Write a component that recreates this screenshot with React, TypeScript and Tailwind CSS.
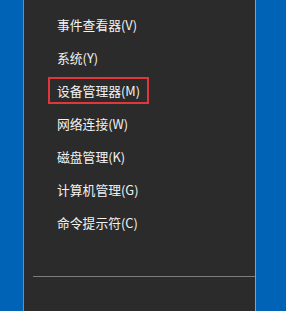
export default function App() {
  const items = [
    "事件查看器(V)",
    "系统(Y)",
    "设备管理器(M)",
    "网络连接(W)",
    "磁盘管理(K)",
    "计算机管理(G)",
    "命令提示符(C)",
  ];
  return (
    <div
      className="flex h-[311px] w-[286px] overflow-hidden bg-[#0063b6]"
      style={{ fontFamily: '"Noto Sans CJK SC", "Noto Sans", sans-serif' }}
    >
      <div className="w-[23px] shrink-0 bg-[#0063b6]" />
      <div className="w-px shrink-0 bg-[#4f95d6]" />
      <div className="flex w-[231px] shrink-0 flex-col bg-[#2b2b2b] pt-[8px]">
        {items.map((t, i) => (
          <div key={t} className="flex h-[33px] items-center pl-[33px]">
            {i === 2 ? (
              <span className="-ml-[9px] border-2 border-[#e0363c] px-[7px] py-[3px] text-[12.8px] leading-[17px] text-[#f2f2f2]">
                {t}
              </span>
            ) : (
              <span className="text-[12.8px] leading-[17px] text-[#f2f2f2]">{t}</span>
            )}
          </div>
        ))}
        <div className="mt-[37px] ml-[9px] h-px bg-[#7c7c7c]" />
      </div>
      <div className="w-px shrink-0 bg-[#9a9a9a]" />
      <div className="flex-1 bg-[#0063b6]" />
    </div>
  );
}
